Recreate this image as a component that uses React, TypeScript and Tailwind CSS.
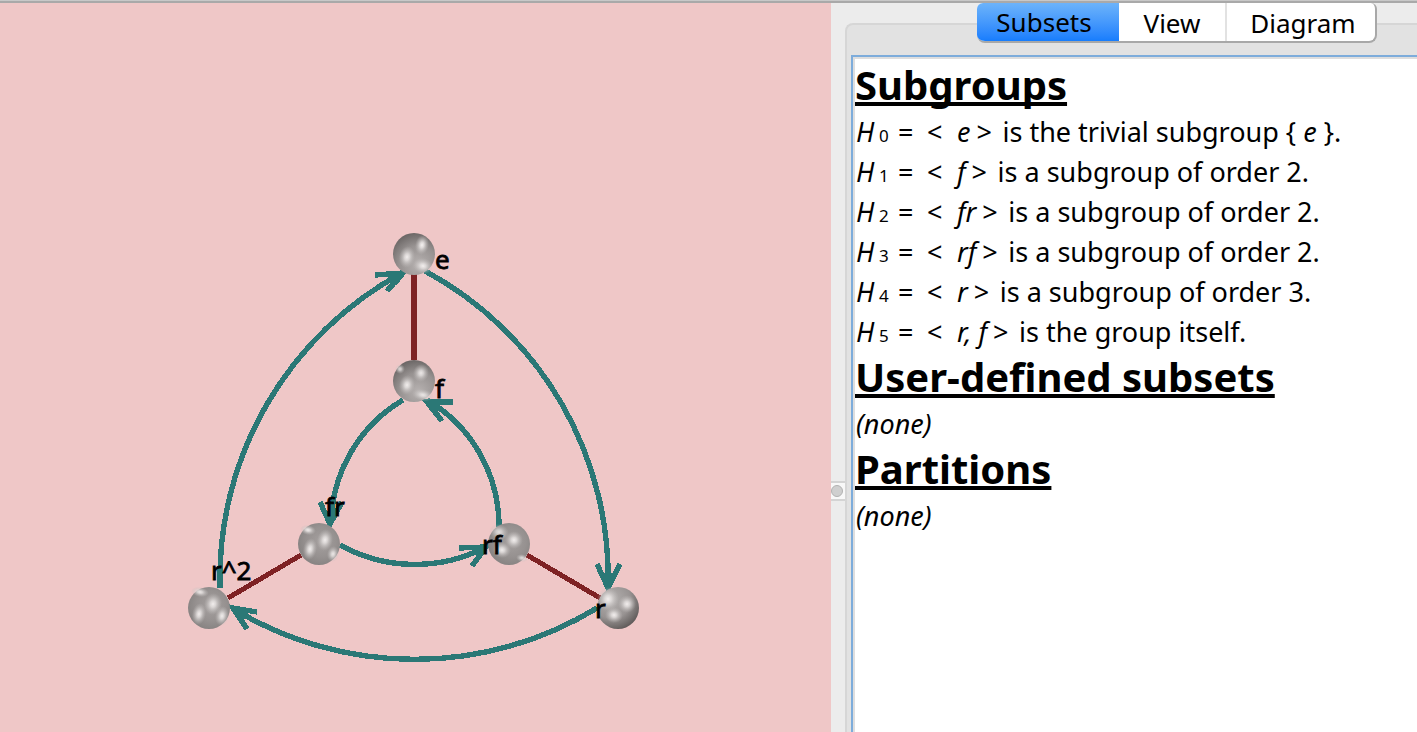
import React, { useState } from "react";

const TEAL = "#2b7876";
const MAROON = "#7e2224";

type Glint = { x: number; y: number; rx: number; ry: number; o: number };
type GroupNode = { id: string; x: number; y: number; lx: number; ly: number; shade: string; glints: Glint[] };

const nodes: GroupNode[] = [
  { id: "e", x: 414, y: 254, lx: 435, ly: 269, shade: "shadeTop", glints: [{ x: 8, y: -9, rx: 7, ry: 10, o: 1 }, { x: -7, y: 3, rx: 8, ry: 11, o: 0.95 }, { x: 9, y: 12, rx: 10, ry: 8, o: 0.95 }] },
  { id: "f", x: 414, y: 381, lx: 435, ly: 398, shade: "shadeTop", glints: [{ x: 7, y: -8, rx: 8, ry: 9, o: 0.9 }, { x: -7, y: 4, rx: 8, ry: 10, o: 0.95 }, { x: 9, y: 14, rx: 11, ry: 6, o: 0.85 }, { x: -14, y: -12, rx: 5, ry: 5, o: 0.8 }] },
  { id: "fr", x: 319, y: 544, lx: 325, ly: 516, shade: "shadeMid", glints: [{ x: 6, y: -4, rx: 8, ry: 11, o: 0.95 }, { x: -9, y: 5, rx: 7, ry: 11, o: 0.95 }, { x: 14, y: 10, rx: 6, ry: 8, o: 0.9 }, { x: -11, y: -14, rx: 8, ry: 5, o: 0.95 }] },
  { id: "rf", x: 509, y: 544, lx: 482, ly: 554, shade: "shadeMid", glints: [{ x: 5, y: -4, rx: 9, ry: 9, o: 0.95 }, { x: -7, y: 6, rx: 9, ry: 8, o: 0.95 }, { x: -10, y: -12, rx: 10, ry: 8, o: 0.8 }, { x: 13, y: 14, rx: 6, ry: 4, o: 0.8 }] },
  { id: "r^2", x: 209, y: 608, lx: 211, ly: 580, shade: "shadeMid", glints: [{ x: 4, y: -4, rx: 9, ry: 11, o: 0.95 }, { x: -10, y: 6, rx: 7, ry: 11, o: 0.95 }, { x: 13, y: 8, rx: 7, ry: 10, o: 0.95 }, { x: -9, y: -16, rx: 9, ry: 5, o: 0.9 }] },
  { id: "r", x: 618, y: 608, lx: 595, ly: 618, shade: "shadeLow", glints: [{ x: 9, y: -4, rx: 9, ry: 9, o: 0.95 }, { x: -4, y: 7, rx: 9, ry: 8, o: 0.95 }, { x: -10, y: -9, rx: 11, ry: 12, o: 0.95 }] },
];

const arcs = [
  "M425 271 A348 348 0 0 1 608 588",
  "M220 588 A348 348 0 0 1 402 273",
  "M597 608 A350 350 0 0 1 232 608",
  "M403 400 A146 146 0 0 0 331 523",
  "M499 527 A146 146 0 0 0 427 400",
  "M340 545 A154 154 0 0 0 486 547",
];

const heads = [
  "M375 275 L403 273 L387 291 M388 275 L403 273 L394 284",
  "M597 564 L608 588 L620 564 M603 574 L608 588 L614 574",
  "M257 612 L233 608 L247 629 M248 612 L233 608 L243 620",
  "M320 502 L330 524 L342 502 M325 512 L330 524 L336 512",
  "M453 402 L427 402 L442 421 M440 404 L427 402 L437 412",
  "M459 548 L486 547 L472 566 M472 549 L486 547 L477 556",
];

function CayleyDiagram() {
  return (
    <svg className="block h-full w-full" viewBox="0 3 831 729" role="img" aria-label="Cayley diagram">
      <defs>
        <radialGradient id="shadeTop" cx="60%" cy="75%" r="75%">
          <stop offset="0" stopColor="#b7b2b1" />
          <stop offset="0.6" stopColor="#979291" />
          <stop offset="1" stopColor="#6d6867" />
        </radialGradient>
        <radialGradient id="shadeMid" cx="55%" cy="45%" r="60%">
          <stop offset="0" stopColor="#a5a09f" />
          <stop offset="0.6" stopColor="#969190" />
          <stop offset="1" stopColor="#858180" />
        </radialGradient>
        <radialGradient id="shadeLow" cx="35%" cy="30%" r="75%">
          <stop offset="0" stopColor="#b5b1b0" />
          <stop offset="0.6" stopColor="#989392" />
          <stop offset="1" stopColor="#5e5958" />
        </radialGradient>
        <radialGradient id="glint">
          <stop offset="0" stopColor="#f6f2f1" />
          <stop offset="0.3" stopColor="#e4e0df" stopOpacity="0.9" />
          <stop offset="1" stopColor="#bcb8b7" stopOpacity="0" />
        </radialGradient>
      </defs>
      <g fill="none" stroke={MAROON} strokeWidth="5" shapeRendering="crispEdges">
        <path d="M414 274 V360" strokeWidth="6" />
        <path d="M301 555 L228 598" />
        <path d="M527 555 L600 598" />
      </g>
      <g fill="none" stroke={TEAL} strokeWidth="5.4" shapeRendering="crispEdges">
        {arcs.map((d) => <path key={d} d={d} />)}
        {heads.map((d) => <path key={d} d={d} />)}
      </g>
      {nodes.map((n) => (
        <g key={n.id}>
          <circle cx={n.x} cy={n.y} r="21" fill={`url(#${n.shade})`} />
          {n.glints.map((g, i) => (
            <ellipse key={i} cx={n.x + g.x} cy={n.y + g.y} rx={g.rx} ry={g.ry} opacity={g.o} fill="url(#glint)" transform={`rotate(10 ${n.x + g.x} ${n.y + g.y})`} />
          ))}
        </g>
      ))}
      <g className="fill-black text-[26px]" stroke="#000" strokeWidth="0.8">
        {nodes.map((n) => <text key={n.id} x={n.lx} y={n.ly}>{n.id}</text>)}
      </g>
    </svg>
  );
}

function Heading({ children }: { children: React.ReactNode }) {
  return (
    <h2 className="h-[52px] text-[40px] leading-[50px] font-bold underline decoration-4 underline-offset-2 [text-decoration-skip-ink:none]">
      {children}
    </h2>
  );
}

const subgroups: { gens: string; rest: React.ReactNode }[] = [
  { gens: "e", rest: <>is the trivial subgroup {"{"} <i>e</i> {"}"}.</> },
  { gens: "f", rest: "is a subgroup of order 2." },
  { gens: "fr", rest: "is a subgroup of order 2." },
  { gens: "rf", rest: "is a subgroup of order 2." },
  { gens: "r", rest: "is a subgroup of order 3." },
  { gens: "r, f", rest: "is the group itself." },
];

const tabs = [
  { name: "Subsets", size: "w-[142px] pr-2" },
  { name: "View", size: "w-[108px] border-r-2 border-[#e2e2e2]" },
  { name: "Diagram", size: "w-[148px] pl-1" },
];

export default function App() {
  const [active, setActive] = useState("Subsets");
  return (
    <div className="flex h-screen flex-col overflow-hidden bg-[#ececec] font-['Noto_Sans','Open_Sans',sans-serif] text-black">
      <div className="h-[3px] shrink-0 border-b-2 border-[#a9a9a9] bg-[#c8c8c8]" />
      <div className="flex min-h-0 flex-1">
        <main className="min-w-0 flex-[831] bg-[#efc7c7]">
          <CayleyDiagram />
        </main>
        <div className="flex w-[14px] shrink-0 flex-col justify-center pt-[246px]">
          <div className="flex h-[20px] items-center border-y-2 border-[#d4d4d4] bg-[#f8f8f8]">
            <span className="h-3 w-3 rounded-full border border-[#b2b2b2] bg-[#cfcfcf]" />
          </div>
        </div>
        <aside className="flex min-w-0 flex-[572] flex-col">
          <div role="tablist" className="relative z-10 ml-[132px] flex h-10 shrink-0 self-start overflow-hidden rounded-b-lg rounded-t-md border-r-2 border-b-2 border-[#a8a8a8] bg-white">
            {tabs.map((t) => (
              <button
                key={t.name}
                role="tab"
                aria-selected={active === t.name}
                onClick={() => setActive(t.name)}
                className={`${t.size} h-10 text-[26px] leading-9 ${active === t.name ? "border-b-2 border-[#1464f6] bg-linear-to-b from-[#6cb3fa] to-[#167dfd]" : ""}`}
              >
                {t.name}
              </button>
            ))}
          </div>
          <div className="-mt-5 flex flex-1 flex-col rounded-tl-lg border-t-2 border-l-2 border-[#d6d6d6] bg-[#e2e2e2] pt-[30px] pl-1">
            <section className="flex-1 border-t-2 border-l-2 border-[#7dacdb] bg-[#dedede] pt-0.5 pl-0.5">
              <div className="h-full bg-white pt-px text-[27px] leading-10 whitespace-nowrap">
                <Heading>Subgroups</Heading>
                <ul>
                  {subgroups.map((s, i) => (
                    <li key={s.gens} className="flex h-10 items-baseline pl-px">
                      <i className="w-[23px]">H</i>
                      <span className="w-[19px] text-[17px]">{i}</span>
                      <span className="w-[29px]">=</span>
                      <span className="w-[30px]">&lt;</span>
                      <i>{s.gens}</i>
                      <span className="ml-1.5 w-[26px]">&gt;</span>
                      <span>{s.rest}</span>
                    </li>
                  ))}
                </ul>
                <Heading>User-defined subsets</Heading>
                <p className="h-10 pl-px italic">(none)</p>
                <Heading>Partitions</Heading>
                <p className="h-10 pl-px italic">(none)</p>
              </div>
            </section>
          </div>
        </aside>
      </div>
    </div>
  );
}
